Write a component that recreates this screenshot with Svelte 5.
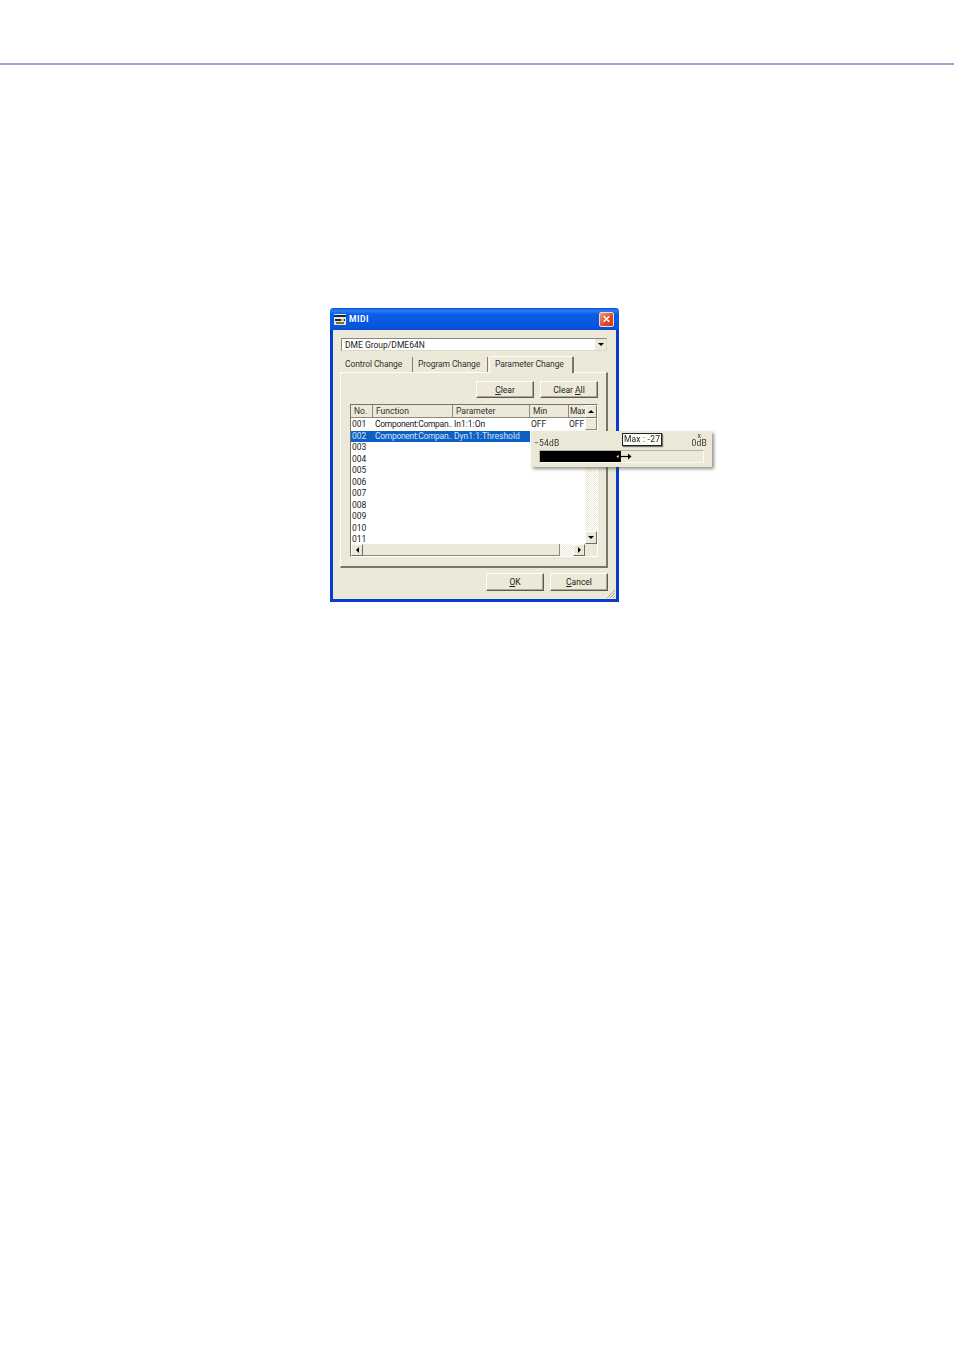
<script lang="ts">
	const columns = [
		{ label: 'No.', width: 22 },
		{ label: 'Function', width: 80 },
		{ label: 'Parameter', width: 77 },
		{ label: 'Min', width: 39 },
		{ label: 'Max', width: 16 }
	];
	const rows = [
		{ no: '001', fn: 'Component:Compan..', param: 'In1:1:On', min: 'OFF', max: 'OFF' },
		{ no: '002', fn: 'Component:Compan..', param: 'Dyn1:1:Threshold', min: '', max: '', selected: true },
		{ no: '003' }, { no: '004' }, { no: '005' }, { no: '006' },
		{ no: '007' }, { no: '008' }, { no: '009' }, { no: '010' }, { no: '011' }
	];
	const tabs = ['Control Change', 'Program Change', 'Parameter Change'];
	let activeTab = $state(2);
</script>

<div class="page">
	<div class="rule"></div>

	<div class="window">
		<div class="titlebar">
			<svg class="app-icon" width="12" height="11" viewBox="0 0 12 11">
				<rect x="0" y="0" width="12" height="11" fill="#dfe6f2" />
				<rect x="0" y="1" width="12" height="2" fill="#1c2430" />
				<rect x="1" y="5" width="10" height="2" fill="#20242c" />
				<rect x="2" y="8" width="8" height="2" fill="#8a6a18" />
				<rect x="7" y="5" width="3" height="2" fill="#e8c020" />
			</svg>
			<span class="title">MIDI</span>
			<button class="close" aria-label="Close">
				<svg width="14" height="14" viewBox="0 0 14 14">
					<path d="M4 4l6 6M10 4l-6 6" stroke="#fff" stroke-width="1.6" fill="none" />
				</svg>
			</button>
		</div>

		<div class="body">
			<div class="combo">
				<span>DME Group/DME64N</span>
				<span class="combo-btn"><i class="arrow down"></i></span>
			</div>

			<div class="tabs">
				{#each tabs as tab, i}
					<button class="tab" class:active={activeTab === i} onclick={() => (activeTab = i)}>{tab}</button>
				{/each}
			</div>

			<div class="panel">
				<div class="actions">
					<button class="btn"><span><u>C</u>lear</span></button>
					<button class="btn"><span>Clear <u>A</u>ll</span></button>
				</div>

				<div class="list">
					<div class="list-main">
						<div class="list-head">
							{#each columns as col}
								<div class="head-cell" style="width: {col.width}px">{col.label}</div>
							{/each}
						</div>
						<div class="list-rows">
							{#each rows as row}
								<div class="row" class:selected={row.selected}>
									<span class="no">{row.no}</span>
									{#if row.fn}
										<span class="fn">{row.fn}</span>
										<span class="param">{row.param}</span>
										<span class="min">{row.min}</span>
										<span class="max">{row.max}</span>
									{/if}
								</div>
							{/each}
						</div>
						<div class="hscroll">
							<span class="sb-btn"><i class="arrow left"></i></span>
							<span class="hthumb"></span>
							<span class="htrack"></span>
							<span class="sb-btn"><i class="arrow right"></i></span>
						</div>
					</div>
					<div class="vscroll">
						<span class="sb-btn tall"><i class="arrow up"></i></span>
						<span class="vthumb"></span>
						<span class="vtrack"></span>
						<span class="sb-btn tall"><i class="arrow down"></i></span>
						<span class="corner"></span>
					</div>
				</div>
			</div>

			<div class="footer">
				<button class="btn wide"><span><u>O</u>K</span></button>
				<button class="btn wide"><span><u>C</u>ancel</span></button>
			</div>
		</div>

		<svg class="grip" width="11" height="11" viewBox="0 0 11 11">
			<path d="M10 2L2 10M10 5L5 10M10 8L8 10" stroke="#a8a594" stroke-width="1" fill="none" />
		</svg>

		<!-- slider popup hangs over the list and past the window edge -->
		<div class="popup">
			<div class="scale">
				<span class="lo">−54dB</span>
				<span class="hi"><small>x</small>0dB</span>
			</div>
			<div class="track"><div class="fill" style="width: {(82 / 165) * 100}%"></div></div>
			<div class="tip">Max : -27</div>
			<svg class="cursor" width="17" height="9" viewBox="0 0 17 9">
				<path d="M1 4.5h14" stroke="#000" stroke-width="1.2" fill="none" />
				<path d="M0 4.5l3.5-3v6zM16.5 4.5l-3.5-3v6z" fill="#000" />
				<path d="M1.5 4.5l2-1.6v3.2z" fill="#fff" />
			</svg>
		</div>
	</div>
</div>

<style>
	:global(body) {
		background: #fff;
	}

	.page {
		height: 1350px;
		overflow: hidden;
		font-family: Roboto, 'Liberation Sans', sans-serif;
		font-size: 8.5px;
		color: #222;
		padding-top: 63px;
		box-sizing: border-box;
	}

	.rule {
		height: 2px;
		background: #a79fd4;
	}

	.window {
		position: relative;
		box-sizing: border-box;
		width: 289px;
		height: 294px;
		margin: 243px 0 0 330px;
		background: #ece9d8;
		border: solid #0a3bd0;
		border-width: 0 3px 3px;
		border-radius: 4px 4px 0 0;
		display: flex;
		flex-direction: column;
		filter: blur(0.3px);
	}

	.titlebar {
		height: 22px;
		flex: none;
		margin: 0 -3px;
		padding: 0 5px 0 4px;
		display: flex;
		align-items: center;
		gap: 3px;
		border-radius: 4px 4px 0 0;
		background: linear-gradient(180deg, #0a52d8 0%, #2a7cf2 12%, #0a5ce6 30%, #0558e0 70%, #0a4fd6 100%);
	}

	.title {
		flex: 1;
		color: #fff;
		font-weight: 700;
		font-size: 8.5px;
		letter-spacing: 0.5px;
	}

	.close {
		width: 15px;
		height: 15px;
		padding: 0;
		border: 1px solid #f4d8d0;
		border-radius: 2px;
		background: linear-gradient(135deg, #ee9a80, #dc4a28 60%, #c83c1c);
		display: flex;
		align-items: center;
		justify-content: center;
	}

	.body {
		flex: 1;
		padding: 8px 8px 0 7px;
		display: flex;
		flex-direction: column;
	}

	.combo {
		margin-left: 1px;
		width: 266px;
		height: 13px;
		box-sizing: border-box;
		background: #fff;
		border: 1px solid #8a8878;
		border-right-color: #dcd9c8;
		border-bottom-color: #dcd9c8;
		padding-left: 3px;
		display: flex;
		align-items: center;
		justify-content: space-between;
	}

	.combo-btn {
		width: 11px;
		height: 11px;
		background: #ece9d8;
		border-left: 1px solid #fff;
		display: flex;
		align-items: center;
		justify-content: center;
	}

	.arrow {
		display: block;
		width: 0;
		height: 0;
		border: 3px solid transparent;
	}
	.arrow.down {
		border-top-color: #000;
		border-bottom-width: 0;
	}
	.arrow.up {
		border-bottom-color: #000;
		border-top-width: 0;
	}
	.arrow.left {
		border-right-color: #000;
		border-left-width: 0;
	}
	.arrow.right {
		border-left-color: #000;
		border-right-width: 0;
	}

	.tabs {
		display: flex;
		align-items: flex-end;
		height: 16px;
		margin-top: 5px;
		position: relative;
		z-index: 1;
	}

	.tab {
		height: 15px;
		padding: 0 0 2px 5px;
		border: 0;
		border-right: 1px solid #7f7d70;
		background: none;
		font: inherit;
		color: #333;
		text-align: left;
		letter-spacing: -0.1px;
		white-space: nowrap;
		width: 73px;
	}
	.tab:nth-child(2) {
		width: 75px;
	}

	.tab.active {
		width: 85px;
		height: 17px;
		margin-bottom: -1px;
		margin-left: 1px;
		padding: 0 0 3px 5px;
		background: #ece9d8;
		border-top: 1px solid #fff;
		border-left: 1px solid #fff;
		border-right: 2px solid #77756a;
		border-radius: 2px 2px 0 0;
	}

	.panel {
		width: 268px;
		height: 196px;
		box-sizing: border-box;
		border: 1px solid #fff;
		border-right: 2px solid #77756a;
		border-bottom: 2px solid #77756a;
		padding: 8px 8px 0 9px;
	}

	.actions {
		display: flex;
		justify-content: flex-end;
		gap: 6px;
	}

	.btn {
		width: 58px;
		height: 17px;
		padding: 0;
		background: #ece9d8;
		border: 1px solid;
		border-color: #fff #5e5c50 #5e5c50 #fff;
		box-shadow: inset -1px -1px 0 #aca899;
		font: inherit;
		color: #222;
	}

	.list {
		margin-top: 6px;
		width: 248px;
		height: 153px;
		box-sizing: border-box;
		display: flex;
		border: 1px solid;
		border-color: #77756a #fff #fff #77756a;
	}

	.list-main {
		width: 234px;
		display: flex;
		flex-direction: column;
	}

	.list-head {
		height: 13px;
		flex: none;
		display: flex;
		background: #ece9d8;
	}

	.head-cell {
		box-sizing: border-box;
		padding-left: 3px;
		line-height: 12px;
		overflow: hidden;
		white-space: nowrap;
		border-right: 1px solid #8c8a7c;
		border-bottom: 1px solid #8c8a7c;
		color: #333;
	}

	.head-cell:last-child {
		padding-left: 1px;
		border-right: 0;
		letter-spacing: -0.3px;
	}

	.list-rows {
		flex: 1;
		background: #fff;
		overflow: hidden;
		padding-top: 1px;
	}

	.row {
		height: 11.55px;
		line-height: 11.5px;
		display: flex;
		white-space: nowrap;
	}

	.row span {
		display: block;
		overflow: hidden;
	}

	.no {
		width: 22px;
		padding-left: 1px;
		box-sizing: border-box;
	}
	.row .fn {
		width: 79px;
		padding-left: 2px;
		box-sizing: border-box;
		letter-spacing: -0.3px;
	}
	.param {
		width: 77px;
		padding-left: 2px;
		box-sizing: border-box;
	}
	.min {
		width: 39px;
		padding-left: 2px;
		box-sizing: border-box;
	}
	.max {
		width: 16px;
		padding-left: 1px;
		box-sizing: border-box;
	}

	.row.selected {
		color: #d8e4f4;
		background: linear-gradient(90deg, #0b5fc6 179px, #fff 179px);
	}

	.hscroll {
		height: 12px;
		flex: none;
		display: flex;
	}

	.sb-btn {
		width: 12px;
		flex: none;
		background: #ece9d8;
		border: 1px solid;
		border-color: #fff #6e6c60 #6e6c60 #fff;
		box-sizing: border-box;
		display: flex;
		align-items: center;
		justify-content: center;
	}

	.hthumb {
		width: 197px;
		background: #ece9d8;
		box-sizing: border-box;
		border-right: 1px solid #8c8a7c;
		border-bottom: 1px solid #8c8a7c;
	}

	.htrack {
		flex: 1;
		background: repeating-conic-gradient(#ece9d8 0 25%, #fff 0 50%) 0 0 / 2px 2px;
	}

	.vscroll {
		width: 12px;
		display: flex;
		flex-direction: column;
	}

	.sb-btn.tall {
		width: 12px;
		height: 13px;
	}

	.vthumb {
		height: 12px;
		flex: none;
		background: #ece9d8;
		box-sizing: border-box;
		border: 1px solid;
		border-color: #fff #8c8a7c #8c8a7c #fff;
	}

	.vtrack {
		flex: 1;
		background: repeating-conic-gradient(#ece9d8 0 25%, #fff 0 50%) 0 0 / 2px 2px;
	}

	.corner {
		height: 12px;
		flex: none;
		background: #ece9d8;
	}

	.footer {
		margin-top: 5px;
		width: 268px;
		display: flex;
		justify-content: flex-end;
		gap: 6px;
	}

	.btn.wide {
		width: 58px;
		height: 18px;
	}

	.grip {
		position: absolute;
		right: 0;
		bottom: 0;
	}

	.popup {
		position: absolute;
		left: 198px;
		top: 123px;
		width: 181px;
		height: 36px;
		box-sizing: border-box;
		background: #ebe8d8;
		box-shadow: 2px 2px 3px rgba(60, 60, 50, 0.55);
		padding: 0 5px 0 3px;
		z-index: 2;
		letter-spacing: 0.2px;
		color: #333;
	}

	.scale {
		height: 17px;
		display: flex;
		justify-content: space-between;
		align-items: flex-end;
		line-height: 9px;
	}

	.hi {
		display: flex;
		flex-direction: column;
		align-items: center;
	}

	.hi small {
		font-size: 7px;
		line-height: 6px;
	}

	.track {
		margin: 2px 3px 0 5px;
		height: 13px;
		box-sizing: border-box;
		background: #ece9d8;
		border: 1px solid;
		border-color: #b8b5a4 #fbfaf2 #fbfaf2 #b8b5a4;
	}

	.fill {
		height: 100%;
		background: #000;
	}

	.tip {
		position: absolute;
		left: 91px;
		top: 2px;
		width: 40px;
		height: 13px;
		box-sizing: border-box;
		background: #fdfdf6;
		border: 1px solid #222;
		box-shadow: 1px 1px 1px #777;
		line-height: 11px;
		text-align: center;
		white-space: nowrap;
		color: #222;
	}

	.cursor {
		position: absolute;
		left: 84px;
		top: 21px;
	}
</style>
